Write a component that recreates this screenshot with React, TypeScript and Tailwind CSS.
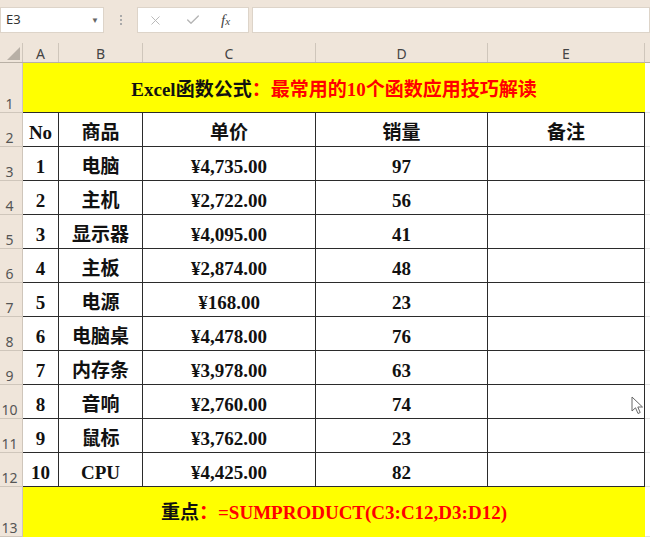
import { X, Check } from "lucide-react"

const cols = ["A", "B", "C", "D", "E"]
const widths = ["w-[36px]", "w-[84px]", "w-[173px]", "w-[172px]", "w-[157px]"]

const data: [string, string, string, string][] = [
  ["1", "电脑", "¥4,735.00", "97"],
  ["2", "主机", "¥2,722.00", "56"],
  ["3", "显示器", "¥4,095.00", "41"],
  ["4", "主板", "¥2,874.00", "48"],
  ["5", "电源", "¥168.00", "23"],
  ["6", "电脑桌", "¥4,478.00", "76"],
  ["7", "内存条", "¥3,978.00", "63"],
  ["8", "音响", "¥2,760.00", "74"],
  ["9", "鼠标", "¥3,762.00", "23"],
  ["10", "CPU", "¥4,425.00", "82"],
]

const serif = "font-['Liberation_Serif','Noto_Sans_CJK_SC',serif]"

function RowHead({ n, tall }: { n: number; tall?: boolean }) {
  return (
    <div
      className={`w-[23px] shrink-0 ${tall ? "h-[50px]" : "h-[34px]"} bg-[#efe5da] border-r border-b border-[#cfc6bb] flex items-end justify-center pr-[3px] pb-[1px] text-[14px] leading-none text-[#555] font-['Noto_Sans',sans-serif]`}
    >
      {n}
    </div>
  )
}

function Cell({ w, children }: { w: string; children?: React.ReactNode }) {
  return (
    <div
      className={`${w} shrink-0 h-[34px] border-r border-b border-[#2b2b2b] flex items-center justify-center pt-[7px] text-[19px] font-bold text-[#111] ${serif}`}
    >
      {children}
    </div>
  )
}

function Rest() {
  return <div className="flex-1 bg-white border-b border-[#e2e2e2]" />
}

export default function App() {
  return (
    <div className="w-[650px] h-[539px] overflow-hidden bg-white relative">
      {/* formula bar */}
      <div className="h-[43px] bg-[#efe5da] flex items-start pt-[7px]">
        <div className="w-[104px] h-[26px] bg-white border border-[#ddd4c9] flex items-center justify-between pl-[5px] pr-[4px] text-[13px] text-[#333] font-['Noto_Sans',sans-serif]">
          <span>E3</span>
          <span className="text-[8px] text-[#666]">▼</span>
        </div>
        <div className="w-[33px] h-[26px] flex flex-col items-center justify-center gap-[2px]">
          <span className="w-[2px] h-[2px] bg-[#aaa]" />
          <span className="w-[2px] h-[2px] bg-[#aaa]" />
          <span className="w-[2px] h-[2px] bg-[#aaa]" />
        </div>
        <div className="w-[112px] h-[26px] bg-white border border-[#ddd4c9] flex items-center pl-[10px]">
          <X className="w-[15px] h-[15px] text-[#b5b5b5]" strokeWidth={1.5} />
          <Check className="w-[16px] h-[16px] text-[#b5b5b5] ml-[22px]" strokeWidth={2} />
          <span className="ml-[20px] italic text-[15px] text-[#444] font-['Liberation_Serif',serif]">
            f<span className="text-[11px]">x</span>
          </span>
        </div>
        <div className="flex-1 h-[26px] bg-white border border-[#ddd4c9] ml-[3px]" />
      </div>

      {/* column headers */}
      <div className="h-[20px] flex bg-[#efe5da] border-b border-[#b9b0a5]">
        <div className="w-[23px] shrink-0 border-r border-[#cfc6bb] flex items-end justify-end pr-[2px] pb-[2px]">
          <div className="w-0 h-0 border-l-[13px] border-l-transparent border-b-[13px] border-b-[#b8b0a6]" />
        </div>
        {cols.map((c, i) => (
          <div
            key={c}
            className={`${widths[i]} shrink-0 border-r border-[#cfc6bb] flex items-end justify-center text-[14px] leading-none pb-[1px] text-[#444] font-['Noto_Sans',sans-serif]`}
          >
            {c}
          </div>
        ))}
        <div className="flex-1" />
      </div>

      {/* row 1 */}
      <div className="flex">
        <RowHead n={1} tall />
        <div
          className={`w-[622px] shrink-0 h-[50px] bg-[#ffff00] border-b border-[#2b2b2b] flex items-center justify-center pt-[5px] text-[19px] font-bold ${serif}`}
        >
          <span className="text-[#111]">Excel函数公式</span>
          <span className="text-[#ff0000]">：最常用的10个函数应用技巧解读</span>
        </div>
        <Rest />
      </div>

      {/* row 2 */}
      <div className="flex">
        <RowHead n={2} />
        <Cell w={widths[0]}>No</Cell>
        <Cell w={widths[1]}>商品</Cell>
        <Cell w={widths[2]}>单价</Cell>
        <Cell w={widths[3]}>销量</Cell>
        <Cell w={widths[4]}>备注</Cell>
        <Rest />
      </div>

      {data.map((r, i) => (
        <div key={r[0]} className="flex">
          <RowHead n={i + 3} />
          <Cell w={widths[0]}>{r[0]}</Cell>
          <Cell w={widths[1]}>{r[1]}</Cell>
          <Cell w={widths[2]}>{r[2]}</Cell>
          <Cell w={widths[3]}>{r[3]}</Cell>
          <Cell w={widths[4]} />
          <Rest />
        </div>
      ))}

      {/* row 13 */}
      <div className="flex">
        <RowHead n={13} tall />
        <div
          className={`w-[622px] shrink-0 h-[50px] bg-[#ffff00] flex items-center justify-center pt-[3px] text-[19px] font-bold ${serif}`}
        >
          <span className="text-[#111]">重点</span>
          <span className="text-[#ff0000]">：=SUMPRODUCT(C3:C12,D3:D12)</span>
        </div>
        <Rest />
      </div>

      {/* mouse pointer */}
      <svg className="absolute left-[631px] top-[396px]" width="13" height="19" viewBox="0 0 13 19">
        <path
          d="M1 1 L1 15 L4.5 11.8 L7 17.5 L9.2 16.5 L6.8 11 L11.5 11 Z"
          fill="#fff"
          stroke="#666"
          strokeWidth="1"
          strokeLinejoin="round"
        />
      </svg>
    </div>
  )
}
